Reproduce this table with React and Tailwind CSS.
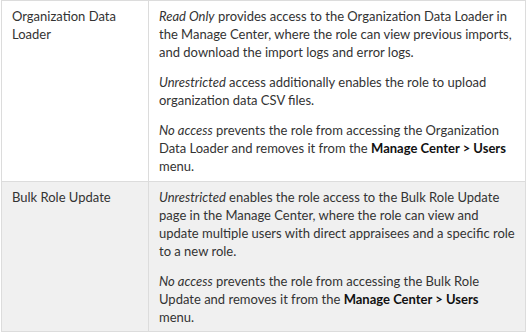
export default function App() {
  const b = "font-bold text-[#111]";
  return (
    <div className="w-[529px] h-[333px] bg-white pl-px text-[13px] leading-[18px] text-[#333]" style={{ fontFamily: "Lato, 'Noto Sans', sans-serif" }}>
      <div className="w-[525px] border border-[#dcdcdc]">
        <div className="grid grid-cols-[147px_1fr] border-b border-[#dcdcdc] bg-white">
          <div className="border-r border-[#dcdcdc] pl-[10px] pt-[6px]">
            Organization Data<br />Loader
          </div>
          <div className="pl-[10px] pt-[6px] pb-[6px] whitespace-nowrap">
            <p className="mb-[12px]">
              <i>Read Only</i> provides access to the Organization Data Loader in<br />
              the Manage Center, where the role can view previous imports,<br />
              and download the import logs and error logs.
            </p>
            <p className="mb-[12px]">
              <i>Unrestricted</i> access additionally enables the role to upload<br />
              organization data CSV files.
            </p>
            <p>
              <i>No access</i> prevents the role from accessing the Organization<br />
              Data Loader and removes it from the <span className={b}>Manage Center &gt; Users</span><br />
              menu.
            </p>
          </div>
        </div>
        <div className="grid grid-cols-[147px_1fr] bg-[#f0f0f0]">
          <div className="border-r border-[#dcdcdc] pl-[10px] pt-[6px]">
            Bulk Role Update
          </div>
          <div className="pl-[10px] pt-[6px] pb-[5px] whitespace-nowrap">
            <p className="mb-[12px]">
              <i>Unrestricted</i> enables the role access to the Bulk Role Update<br />
              page in the Manage Center, where the role can view and<br />
              update multiple users with direct appraisees and a specific role<br />
              to a new role.
            </p>
            <p>
              <i>No access</i> prevents the role from accessing the Bulk Role<br />
              Update and removes it from the <span className={b}>Manage Center &gt; Users</span><br />
              menu.
            </p>
          </div>
        </div>
      </div>
    </div>
  );
}
